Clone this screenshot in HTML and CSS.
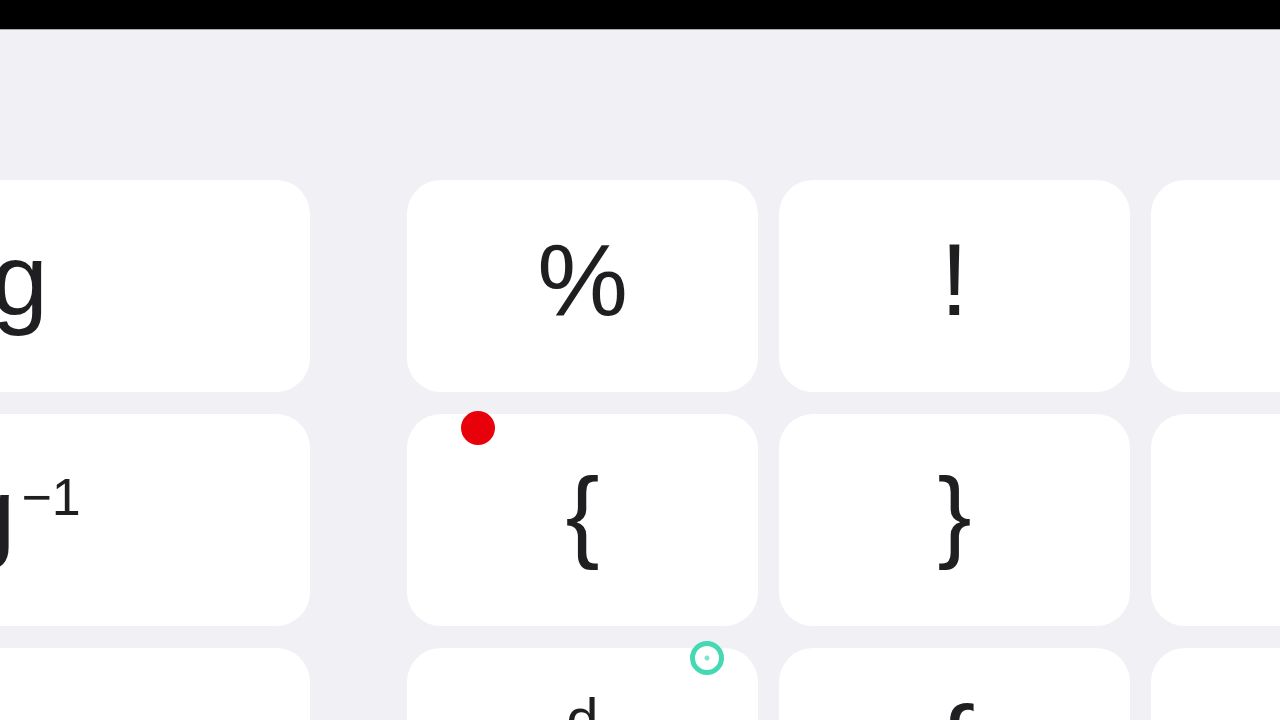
FILE: index.html
```html
<!DOCTYPE html>
<html lang="en">
<head>
<meta charset="utf-8">
<title>Calculator keys</title>
<link rel="stylesheet" href="styles.css">
</head>
<body>
<div class="statusbar"></div>
<main class="keypad">
  <section class="panel panel-left">
    <div class="key"><span class="label">log</span></div>
    <div class="key"><span class="label">log<span class="sup">&minus;1</span></span></div>
    <div class="key"></div>
  </section>
  <section class="panel panel-main">
    <div class="key"><span class="label">%</span></div>
    <div class="key"><span class="label">!</span></div>
    <div class="key"></div>
    <div class="key"><span class="label">{</span></div>
    <div class="key"><span class="label">}</span></div>
    <div class="key"></div>
    <div class="key key-frac">
      <span class="frac"><span class="num">d</span><span class="bar"></span><span class="den">dx</span></span>
    </div>
    <div class="key key-int"><span class="label">&int;</span></div>
    <div class="key"></div>
  </section>
  <span class="touch touch-red"></span>
  <span class="touch touch-ring"></span>
</main>
</body>
</html>
```

FILE: styles.css
```css
* { box-sizing: border-box; }

html, body {
  margin: 0;
  padding: 0;
  width: 1280px;
  height: 720px;
  overflow: hidden;
  background: #f1f1f5;
  font-family: "Liberation Sans", Arial, sans-serif;
}

.statusbar {
  height: 30px;
  background: #000;
  border-bottom: 1px solid #a9a9ad;
}

.keypad {
  position: relative;
  display: flex;
  gap: 97px;
  margin-left: -350px;
  padding-top: 150px;
}

.panel {
  display: grid;
  grid-auto-rows: 212px;
  row-gap: 22px;
  flex: none;
}

.panel-left { grid-template-columns: 660px; }
.panel-main { grid-template-columns: repeat(3, 351px); column-gap: 21px; }

.key {
  background: #ffffff;
  border-radius: 34px;
  display: flex;
  align-items: center;
  justify-content: center;
  padding-bottom: 12px;
  font-size: 102px;
  line-height: normal;
  color: #1f1f22;
  white-space: nowrap;
}

.label { display: block; }

.sup {
  font-size: 52px;
  line-height: 0;
  vertical-align: 0.64em;
  margin-left: 6px;
}

.frac {
  display: flex;
  flex-direction: column;
  align-items: center;
  font-size: 58px;
  line-height: 1;
}

.key-frac { padding-bottom: 0; }

.bar {
  width: 64px;
  height: 4px;
  background: #1f1f22;
  margin: 4px 0;
}

.key-int { padding-bottom: 22px; }

.touch {
  position: absolute;
  border-radius: 50%;
}

.touch-red {
  left: 811px;
  top: 381px;
  width: 34px;
  height: 34px;
  background: #e8000b;
}

.touch-ring {
  left: 1040px;
  top: 611px;
  width: 34px;
  height: 34px;
  border: 5px solid #45d9b3;
  background: radial-gradient(circle, #7fe3c9 0 2px, rgba(255,255,255,0.6) 3px);
}
```
